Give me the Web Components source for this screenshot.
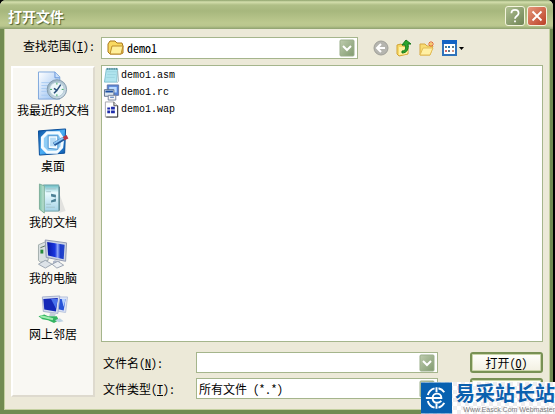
<!DOCTYPE html>
<html lang="zh-CN">
<head>
<meta charset="utf-8">
<title>打开文件</title>
<style>
body{margin:0;background:#000;color:#000;font:12px/16px "Noto Sans Mono CJK SC","Noto Sans CJK SC",sans-serif}
</style>
</head>
<body>
<file-dialog></file-dialog>
<script>
const icons = {
recent:`<svg viewBox="0 0 32 32"><defs><linearGradient id="p" x2="1" y2="1"><stop stop-color="#fff"/><stop offset="1" stop-color="#8ebaf0"/></linearGradient><linearGradient id="c" x2="1" y2="1"><stop stop-color="#8da9bc"/><stop offset="1" stop-color="#dce8ef"/></linearGradient></defs><path d="M1 1h17l5 5v23H1z" fill="url(#p)" stroke="#7fa7dc"/><path d="M18 1v6h5" fill="#c9dffa" stroke="#6795da"/><path d="M4 12h9M4 15h7M4 18h6M4 21h6M4 25h9" stroke="#a9cbf3"/><circle cx="20" cy="19" r="10" fill="url(#c)" stroke="#8199aa"/><circle cx="20" cy="19" r="7.500" fill="#edf7f9" stroke="#b5cad6"/><path d="M24 14l-4 6-3-2M20 20l-3 3" fill="none" stroke="#294f7b" stroke-width="1.500"/><path d="M20 12v2M27 19h-2M20 26v-2M13 19h2" stroke="#39a45c"/></svg>`,
desktop:`<svg viewBox="0 0 32 32"><defs><linearGradient id="d" x2="1" y2="1"><stop stop-color="#0751a3"/><stop offset=".5" stop-color="#4aaef5"/><stop offset="1" stop-color="#0753a8"/></linearGradient></defs><path d="M1 4l28-2-1 25-26 2z" fill="url(#d)" stroke="#064b98"/><path d="M10 6h12l4 6-1 9-5 5H10l-5-5V11z" fill="#8fcdf5" stroke="#f4fbff" stroke-width="3"/><path d="M11 9h10v14l-10-1z" fill="#f7fdff" stroke="#4b94cf"/><path d="M13 11h6v9h-6z" fill="#b7dcf6"/><path d="M17 18l10-6" stroke="#245b9c" stroke-width="4"/><path d="M17 17l10-6" stroke="#8cc7f5" stroke-width="2"/><path d="M27 12l4-2" stroke="#b73545" stroke-width="4"/></svg>`,
documents:`<svg viewBox="0 0 32 32"><defs><linearGradient id="g" x2="1"><stop stop-color="#7bc2a7"/><stop offset="1" stop-color="#c5e5d7"/></linearGradient><linearGradient id="b" x2="0" y2="1"><stop stop-color="#67bbc2"/><stop offset=".3" stop-color="#e9fbff"/><stop offset="1" stop-color="#a5d3e6"/></linearGradient></defs><path d="M23 12l6 17-7 2z" fill="#e2e2df"/><path d="M6 2h16v27H6z" fill="url(#b)" stroke="#72a5aa"/><path d="M9 6h10M9 9h5M9 22h5M9 25h9" stroke="#a3c4cb"/><path d="M14 11l5 1v3l-5-1zM14 18l5-2v3l-5 1z" fill="#4b8095"/><path d="M2 1l5 2v28l-5-4z" fill="url(#g)" stroke="#7fae9a"/><path d="M22 3l1 1v24l-1 1z" fill="#477886"/></svg>`,
computer:`<svg viewBox="0 0 32 32"><defs><linearGradient id="m" x2="1"><stop stop-color="#0716a5"/><stop offset=".45" stop-color="#1a36df"/><stop offset=".6" stop-color="#8fa5fa"/><stop offset=".75" stop-color="#1c3ccc"/><stop offset="1" stop-color="#2345c9"/></linearGradient></defs><path d="M1 6l7-3 3 3v16l-8 2-2-2z" fill="#d9e0e1" stroke="#a4aead"/><path d="M3 9l5-2" stroke="#59735d"/><path d="M3 11h3v4H3z" fill="#278a3c"/><path d="M8 1l22 3-1 19-20-4z" fill="#ccd4e4" stroke="#929ab0"/><path d="M10 3l18 3-1 15-16-4z" fill="url(#m)"/><path d="M18 22l5 1v3h-7v-3z" fill="#aeb6c8"/><path d="M15 26l6-3 6 4-7 3z" fill="#edf0f3" stroke="#9ba4b2"/><path d="M1 26l7-4 7 4-7 4z" fill="#dde3e8" stroke="#9ba5b2"/></svg>`,
network:`<svg viewBox="0 0 32 32"><path d="M17 2h14l-2 16-13-2z" fill="#dbe3f6" stroke="#b9c4dc"/><path d="M19 4h10l-2 12-9-2z" fill="#2854d8"/><path d="M25 4h4l-2 8z" fill="#b3d0ff"/><path d="M5 2l18-1-2 18L6 17z" fill="#d7def0" stroke="#a5b0cc"/><path d="M6 4l15-1-2 14L7 15z" fill="#1428b7"/><path d="M14 4h7l-2 10z" fill="#4972ec"/><path d="M13 18l6 1-1 3h-6z" fill="#c4ced9"/><path d="M1 22l6-2 4 2h9l2 4-5 3-6-3-6-1z" fill="#34b461"/><path d="M3 22l5 1 8 2" stroke="#a0edae" stroke-width="2"/><path d="M18 26l5-2 4 3-5 1z" fill="#bdd3e3"/></svg>`,
folder:`<svg viewBox="0 0 18 18"><path d="M1 5l2-3h5l2 2h5l1 3v7l-2 1H3l-2-2z" fill="#f9d961" stroke="#aa791d"/><path d="M5 7h11l-2 8H3z" fill="#ffef9a" stroke="#bd8d2b"/></svg>`,
asm:`<svg viewBox="0 0 18 18"><path d="M3 2h12l-1 14H1z" fill="#b0e4ee" stroke="#7fbfce"/><path d="M4 5h10M4 8h9M3 11h9" stroke="#9bd5df"/><path d="M4 3V1m2 2V1m2 2V1m2 2V1m2 2V1m2 2V1" stroke="#316e7b"/><path d="M15 4l1 11-2 2" fill="none" stroke="#a9b9bb"/></svg>`,
rc:`<svg viewBox="0 0 18 18"><path d="M4 1h12v11H4z" fill="#5684d7" stroke="#6478a7"/><path d="M6 3h8v6H6z" fill="#bddcff"/><path d="M1 6h10v7H1z" fill="#dce6ed" stroke="#596c89"/><path d="M2 7h8v2H2z" fill="#1b4fa2"/><path d="M5 12h8v5H5z" fill="#f6f6f6" stroke="#77849c"/><path d="M7 14h4" stroke="#3468b0"/></svg>`,
wap:`<svg viewBox="0 0 18 18"><path d="M2 1h9l4 4v12H2z" fill="#fff" stroke="#a5a8ad"/><path d="M11 1v4h4" fill="#ddd" stroke="#555"/><path d="M15 5v12H3" fill="none" stroke="#333"/><path d="M4 7h3v2H4zM8 6h4v3H8zM4 10h3v3H4zM8 10h4v3H8z" fill="#1d2caa"/></svg>`,
back:`<svg viewBox="0 0 18 18"><circle cx="9" cy="9" r="7" fill="#b5b5af" stroke="#a0a099"/><path d="M13 9H6m3-4L5 9l4 4" fill="none" stroke="#fff" stroke-width="2"/></svg>`,
up:`<svg viewBox="0 0 18 18"><path d="M2 6l4-1 2 2h5v8l-9 2-2-2z" fill="#f7d967" stroke="#d2a334"/><path d="M4 8h10l-2 7-8 1z" fill="#fff1a0"/><path d="M7 12c4 0 4-3 3-6H7l4-5 5 4h-3c1 5-1 9-6 9z" fill="#2aa52d" stroke="#15791b"/></svg>`,
create:`<svg viewBox="0 0 18 18"><path d="M2 5h5l2 2h6l-3 9H2z" fill="#f8dc72" stroke="#d6a742"/><path d="M5 9h10l-3 7H2z" fill="#fff0a4" stroke="#e3bd56"/><path d="M13 2v6M10 5h6M11 3l4 4M15 3l-4 4" stroke="#e66d2c"/><circle cx="13" cy="5" r="1" fill="#ffed7b"/></svg>`,
view:`<svg viewBox="0 0 24 18"><path d="M2 2h13v14H2z" fill="#fff" stroke="#2f73ba" stroke-width="2"/><path d="M1 1h15v4H1z" fill="#1263c4"/><path d="M4 7h2v2H4zm7 0h2v2h-2zM7 11h2v2H7z" fill="#567d8c"/><path d="M7 7h2v2H7z" fill="#1c75bb"/><path d="M11 11h2v2h-2z" fill="#d29783"/><path d="M4 11h2v2H4z" fill="#d46969"/><path d="M18 8h5l-2.500 3z" fill="#000"/></svg>`,
help:`<svg viewBox="0 0 20 20"><path d="M6 7c0-5 8-5 8 0 0 3-4 3-4 6M10 15v2" fill="none" stroke="#fff" stroke-width="2"/></svg>`,
close:`<svg viewBox="0 0 20 20"><path d="M5 5l10 10M15 5L5 15" stroke="#fff" stroke-width="2"/></svg>`,
arrow:`<svg viewBox="0 0 16 18"><defs><linearGradient id="a" x2="1" y2="1"><stop stop-color="#becbae"/><stop offset="1" stop-color="#819b70"/></linearGradient></defs><rect x="1" y="1" width="14" height="16" rx="1" fill="url(#a)" stroke="#9baf8b"/><path d="M4 7l4 4 4-4" fill="none" stroke="#fff" stroke-width="2"/></svg>`,
logo:`<svg viewBox="0 0 32 32"><path d="M0 0h32v32H0z" fill="#0861b0"/><path d="M14 6a10 10 0 0 0-7 7M7 19a10 10 0 0 0 7 7M18 6a10 10 0 0 1 6 4M24 21a10 10 0 0 1-6 5" fill="none" stroke="#fff" stroke-width="2"/><path d="M12 16h9c0-6-9-6-9 0 0 6 6 6 9 3" fill="none" stroke="#fff" stroke-width="2"/><path d="M5 16h7M16 5v5M16 22v5" stroke="#fff" stroke-width="2"/></svg>`
};
const define = (name, css, html) => customElements.define(name, class extends HTMLElement {
  constructor(){
    super();
    const t = document.createElement('template');
    t.innerHTML = `<style>*{box-sizing:border-box}svg{display:block;width:100%;height:100%}button{font:inherit;color:inherit;border:0;padding:0;margin:0;background:none}${css}</style>` + (typeof html === 'function' ? html(this) : html);
    this.attachShadow({mode:'open'}).append(t.content.cloneNode(true));
  }
});

define('dialog-icon', `:host{display:block;flex:none;width:18px;height:18px}`, e => icons[e.getAttribute('name')] || '');

define('title-bar', `
:host{display:flex;align-items:center;gap:2px;height:29px;padding:2px 6px 0 8px;background:linear-gradient(#8da16b 0,#d4dfad 2px,#b0bf87 5px,#a7b77d 11px,#bdc98f 23px,#b9c68d 26px,#8da06e 29px);border-radius:6px 6px 0 0}
h1{flex:1;margin:0;font-size:14px;line-height:20px;font-weight:700;color:#fff;text-shadow:1px 1px 1px #4b6033}
button{width:20px;height:20px;border:1px solid #f4f4dd;border-radius:3px;background:linear-gradient(135deg,#afbf91,#6f8354)}
button.close{background:linear-gradient(135deg,#e5977b,#bb4026)}`,
`<h1><slot></slot></h1><button aria-label="帮助"><dialog-icon name="help"></dialog-icon></button><button class="close" aria-label="关闭"><dialog-icon name="close"></dialog-icon></button>`);

define('place-item', `
:host{display:block;height:56px}
button{width:100%;display:flex;flex-direction:column;align-items:center;white-space:nowrap;line-height:16px}
dialog-icon{width:32px;height:31px}`,
e => `<button><dialog-icon name="${e.getAttribute('icon')}"></dialog-icon><slot></slot></button>`);

define('file-item', `
:host{display:block}
button{display:flex;align-items:center;font:10px/17px "Liberation Mono",monospace}
dialog-icon{height:17px}`,
e => `<button><dialog-icon name="${e.getAttribute('icon')}"></dialog-icon><slot></slot></button>`);

define('drop-field', `
:host{display:grid;height:22px;border:1px solid #a5b58c;background:#fff;grid-template-columns:auto 1fr 18px;align-items:center}
.lead{padding-left:5px;width:23px}
::slotted(select),::slotted(input){grid-column:2;width:100%;min-width:0;height:18px;margin:0;padding:0 2px;border:0;outline:0;appearance:none;background:none;color:#000;font:12px/18px "Noto Sans Mono CJK SC","Noto Sans CJK SC",sans-serif}
.arrow{width:16px;height:18px;grid-column:3;pointer-events:none}`,
e => `${e.hasAttribute('icon') ? `<dialog-icon class="lead" name="${e.getAttribute('icon')}"></dialog-icon>` : '<span></span>'}<slot></slot><dialog-icon class="arrow" name="arrow"></dialog-icon>`);

define('site-mark', `
:host{display:flex;height:32px;gap:3px;background:conic-gradient(#fff 25%,#eeeef0 0 50%,#fff 0 75%,#eeeef0 0) 0 0/8px 8px}
dialog-icon{width:31px;height:32px}
div{display:flex;flex-direction:column;align-items:flex-end;white-space:nowrap}
b{font:700 20px/24px "Liberation Sans","Noto Sans CJK SC",sans-serif;color:#0a60ae}
small{font:7px/8px "Liberation Sans",sans-serif;color:#7b7b7b}`,
`<dialog-icon name="logo"></dialog-icon><div><b>易采站长站</b><small>Www.Easck.Com Webmaster</small></div>`);

define('file-dialog', `
:host{display:flex;flex-direction:column;position:relative;min-height:100vh;margin-right:2px;background:#ece9d8;border-radius:6px 6px 0 0}
main{flex:1;display:grid;grid-template:22px 1fr/84px 1fr;gap:7px 6px;padding:8px 7px 11px;border:solid #718b51;border-width:0 3px 4px 4px;box-shadow:inset 1px 0 #c3d09f,inset -1px 0 #c3d09f,inset 0 -1px #c3d09f}
.look{text-align:right;line-height:18px;white-space:nowrap}
.top{display:flex;gap:14px;align-items:center}
.top drop-field{flex:1}
nav{display:flex;gap:5px;width:171px}
nav button{width:18px;height:18px}
nav button:last-child,nav button:last-child dialog-icon{width:24px}
aside{background:#f9f8f3;border:2px solid #fff;border-right-color:#dedace;border-bottom-color:#dedace;padding:3px 0;margin-bottom:2px}
.right{display:flex;flex-direction:column}
.files{flex:1;background:#fff;border:1px solid #a5b58c;padding:1px;margin-top:-1px}
form{display:grid;grid-template-columns:95px minmax(0,242px) minmax(28px,1fr) 73px;grid-auto-rows:21px;row-gap:5px;margin-top:10px}
form label{padding:0 2px;line-height:21px;white-space:nowrap}
form button{grid-column:4;border:2px solid #789154;border-radius:3px;background:linear-gradient(#fffffb,#f2f0e2);box-shadow:inset 0 0 0 1px #cad5a9;white-space:nowrap;line-height:17px}
form drop-field{height:21px}
u{text-decoration-thickness:1px}
site-mark{position:absolute;right:-2px;bottom:0}`,
`<title-bar>打开文件</title-bar>
<main>
<label class="look" for="look">查找范围(<u>I</u>):</label>
<div class="top"><drop-field icon="folder"><select id="look"><option>demo1</option></select></drop-field>
<nav aria-label="工具栏"><button aria-label="后退"><dialog-icon name="back"></dialog-icon></button><button aria-label="向上"><dialog-icon name="up"></dialog-icon></button><button aria-label="新建文件夹"><dialog-icon name="create"></dialog-icon></button><button aria-label="查看"><dialog-icon name="view"></dialog-icon></button></nav></div>
<aside><place-item icon="recent">我最近的文档</place-item><place-item icon="desktop">桌面</place-item><place-item icon="documents">我的文档</place-item><place-item icon="computer">我的电脑</place-item><place-item icon="network">网上邻居</place-item></aside>
<div class="right">
<div class="files"><file-item icon="asm">demo1.asm</file-item><file-item icon="rc">demo1.rc</file-item><file-item icon="wap">demo1.wap</file-item></div>
<form><label for="name">文件名(<u>N</u>):</label><drop-field><input id="name" type="text"></drop-field><button type="button">打开(<u>O</u>)</button>
<label for="type">文件类型(<u>T</u>):</label><drop-field><select id="type"><option>所有文件 (*.*)</option></select></drop-field><button type="button" aria-label="取消"></button></form>
</div>
</main>
<site-mark></site-mark>`);
</script>
</body>
</html>
